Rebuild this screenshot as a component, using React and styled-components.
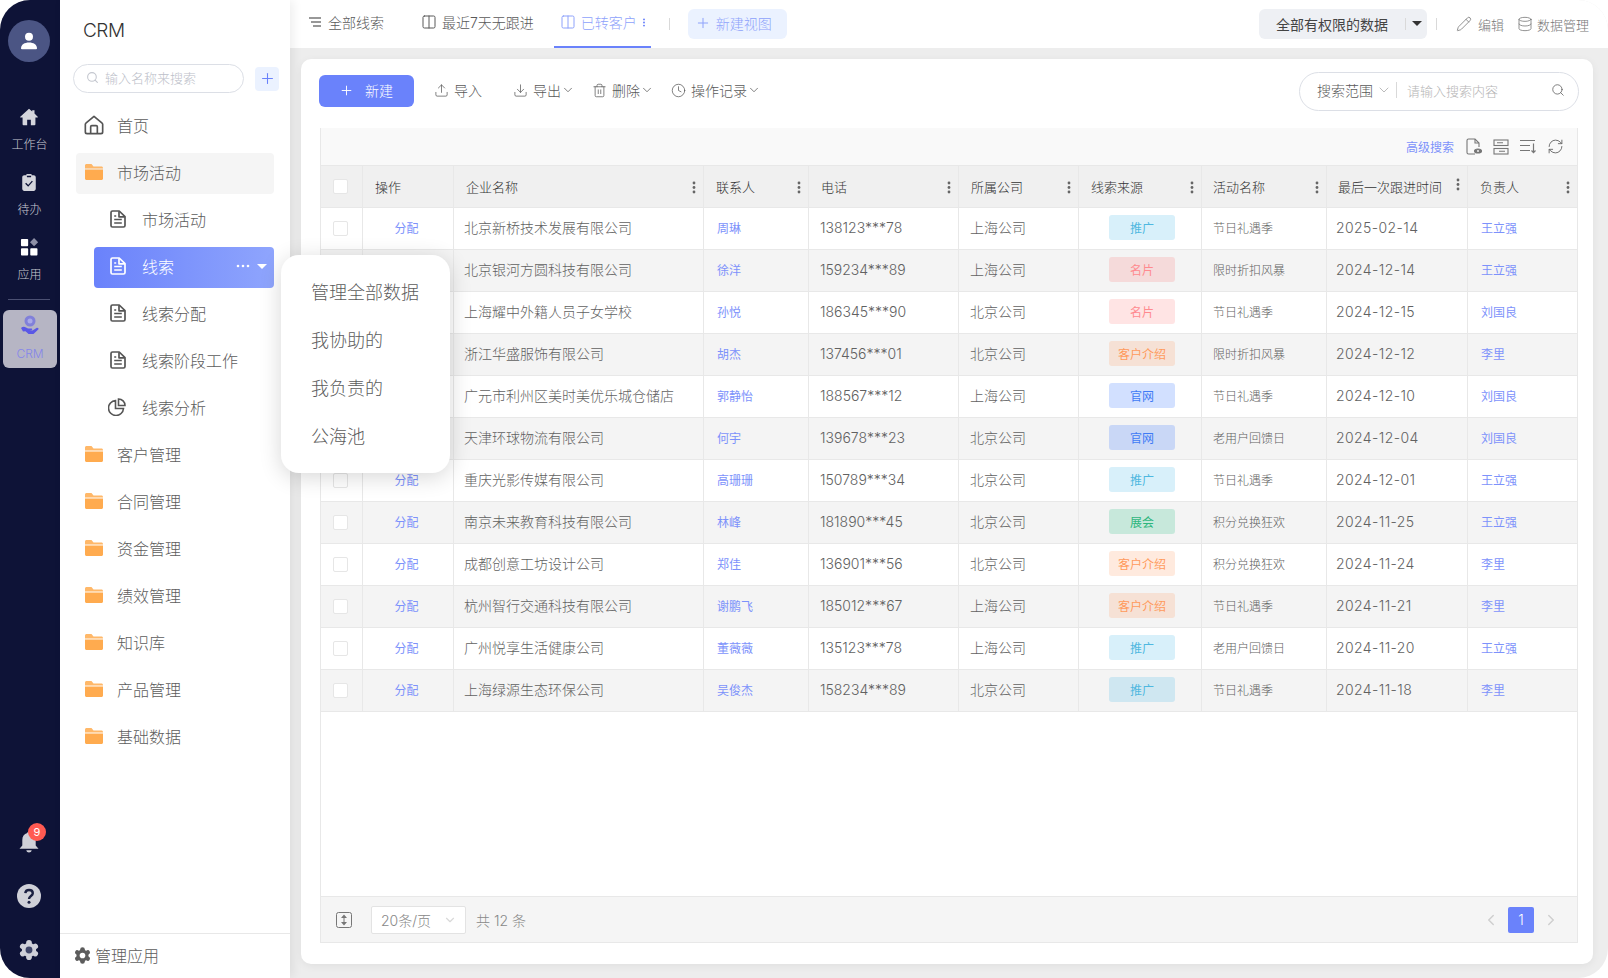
import React from 'react';
import styled, { createGlobalStyle } from 'styled-components';
import {
  Plus, Upload, Download, Trash2, Clock, ChevronDown, ChevronLeft, ChevronRight,
  Search, Pencil, Database, RefreshCw, Columns2,
} from 'lucide-react';

const GlobalStyle = createGlobalStyle`
  html, body { margin: 0; padding: 0; background: #fff; }
  * { box-sizing: border-box; }
  body {
    font-family: Inter, "Noto Sans CJK SC", sans-serif;
    font-weight: 300;
    color: #595959;
  }
`;

const COLUMNS = '43px 91px 250px 105px 150px 120px 123px 125px 141px 1fr';

const Shell = styled.div`
  width: 1608px;
  height: 978px;
  display: flex;
  overflow: hidden;
  border-radius: 30px;
  background: #ededed;
`;

/* dark rail */
const Rail = styled.aside`
  width: 60px;
  flex: none;
  background: #0e1337;
  display: flex;
  flex-direction: column;
  align-items: center;
  padding: 20px 2px 16px 0;
`;
const Avatar = styled.div`
  width: 42px;
  height: 42px;
  border-radius: 50%;
  background: #4b5584;
  display: flex;
  align-items: center;
  justify-content: center;
  margin-bottom: 44px;
`;
const RailItem = styled.div`
  height: 48px;
  margin-bottom: 17px;
  padding-left: 1px;
  display: flex;
  flex-direction: column;
  align-items: center;
  gap: 8px;
  color: #c9cad3;
  font-size: 12px;
  line-height: 18px;
  &:nth-of-type(4) { margin-bottom: 0; }
`;
const RailLine = styled.div`
  width: 42px;
  height: 1px;
  background: #4b5072;
  margin: 15px 0 10px;
`;
const RailActive = styled.div`
  width: 54px;
  height: 58px;
  margin-left: 2px;
  border-radius: 6px;
  background: #b6b5c4;
  color: #8585ea;
  font-size: 12px;
  display: flex;
  flex-direction: column;
  align-items: center;
  padding-top: 5px;
  gap: 10px;
  line-height: 18px;
`;
const RailBottom = styled.div`
  margin-top: auto;
  display: flex;
  flex-direction: column;
  align-items: center;
  gap: 30px;
`;
const BellWrap = styled.div`
  position: relative;
  height: 24px;
`;
const Badge = styled.span`
  position: absolute;
  top: -7px;
  left: 11px;
  width: 18px;
  height: 18px;
  border-radius: 50%;
  background: #ff5a52;
  color: #fff;
  font-size: 11px;
  font-weight: 400;
  line-height: 18px;
  text-align: center;
`;

/* app nav */
const Nav = styled.nav`
  width: 230px;
  flex: none;
  background: #fff;
  position: relative;
  z-index: 3;
  display: flex;
  flex-direction: column;
  box-shadow: 3px 0 10px rgba(0, 0, 0, 0.07);
`;
const NavTitle = styled.div`
  height: 64px;
  padding: 19px 0 0 23px;
  font-size: 19px;
  letter-spacing: -0.5px;
  line-height: 24px;
  color: #333;
`;
const NavSearchRow = styled.div`
  display: flex;
  align-items: center;
  gap: 11px;
  padding-left: 13px;
  height: 29px;
  margin-bottom: 13px;
`;
const NavSearch = styled.div`
  width: 171px;
  height: 29px;
  border: 1px solid #dcdfe6;
  border-radius: 15px;
  display: flex;
  align-items: center;
  gap: 6px;
  padding: 0 0 2px 12px;
  font-size: 13px;
  color: #bcc0c9;
`;
const AddBox = styled.div`
  width: 24px;
  height: 24px;
  border-radius: 4px;
  background: #ebf2ff;
  color: #6a82fb;
  display: flex;
  align-items: center;
  justify-content: center;
`;
const NavList = styled.div`
  display: flex;
  flex-direction: column;
  gap: 6px;
  padding: 0 16px;
`;
const NavItem = styled.div`
  position: relative;
  height: 41px;
  display: flex;
  align-items: center;
  margin-left: ${(p) => (p.$sub ? '18px' : '0')};
  padding: 0 0 3px ${(p) => (p.$sub ? '16px' : '9px')};
  gap: ${(p) => (p.$sub ? '16px' : '14px')};
  border-radius: 4px;
  font-size: 16px;
  color: ${(p) => (p.$selected ? '#fff' : '#5c5c5c')};
  background: ${(p) =>
    p.$selected ? 'linear-gradient(90deg, #6a82fb, #8fa5fd)' : p.$open ? '#f5f5f5' : 'transparent'};
`;
const ItemTools = styled.div`
  margin-left: auto;
  margin-right: 7px;
  display: flex;
  align-items: center;
  gap: 7px;
`;
const Menu = styled.div`
  position: absolute;
  left: 187px;
  top: 8px;
  width: 169px;
  height: 218px;
  border-radius: 18px;
  background: #fff;
  box-shadow: 0 4px 22px rgba(0, 0, 0, 0.16);
  padding: 14px 0 0 30px;
  color: #5c5c5c;
  font-size: 18px;
  line-height: 48px;
`;
const NavFoot = styled.div`
  margin-top: auto;
  height: 45px;
  border-top: 1px solid #e8e8e8;
  display: flex;
  align-items: center;
  gap: 4px;
  padding: 0 0 2px 14px;
  font-size: 16px;
  color: #5c5c5c;
`;

/* main */
const Main = styled.main`
  flex: 1;
  min-width: 0;
  display: flex;
  flex-direction: column;
`;
const TopBar = styled.header`
  height: 48px;
  flex: none;
  background: #fff;
  display: flex;
  align-items: center;
  padding-left: 19px;
  font-size: 14px;
`;
const Tab = styled.div`
  height: 48px;
  display: flex;
  align-items: center;
  gap: ${(p) => p.$gap || 5}px;
  padding: ${(p) => p.$pad || '0'};
  color: ${(p) => (p.$active ? '#8ea2fb' : '#595959')};
  border-bottom: 2px solid ${(p) => (p.$active ? '#6a82fb' : 'transparent')};
  padding-bottom: 2px;
`;
const VLine = styled.span`
  width: 1px;
  height: ${(p) => p.$h || 12}px;
  background: #d9d9d9;
  margin: ${(p) => p.$m || '0'};
`;
const NewView = styled.div`
  width: 99px;
  height: 30px;
  border-radius: 6px;
  background: #ebf2ff;
  color: #8ea2fb;
  display: flex;
  align-items: center;
  gap: 5px;
  padding: 0 0 2px 7px;
`;
const Scope = styled.div`
  margin-left: auto;
  width: 168px;
  height: 30px;
  border-radius: 6px;
  background: #eef0f4;
  color: #444;
  font-weight: 400;
  display: flex;
  align-items: center;
  padding: 0 0 1px 17px;
`;
const Caret = styled.span`
  width: 0;
  height: 0;
  border-left: ${(p) => p.$size}px solid transparent;
  border-right: ${(p) => p.$size}px solid transparent;
  border-top: ${(p) => p.$size}px solid ${(p) => p.$color};
`;
const TopAction = styled.div`
  display: flex;
  align-items: center;
  gap: ${(p) => p.$gap}px;
  font-size: 13px;
  color: #777;
  margin-right: ${(p) => p.$mr};
`;

const Content = styled.div`
  flex: 1;
  min-height: 0;
  padding: 11px 15px 14px 11px;
  display: flex;
`;
const Card = styled.section`
  flex: 1;
  min-width: 0;
  background: #fff;
  border-radius: 10px;
  box-shadow: 0 2px 8px rgba(0, 0, 0, 0.06);
  padding: 12px 15px 21px 19px;
  display: flex;
  flex-direction: column;
`;
const Toolbar = styled.div`
  height: 40px;
  flex: none;
  margin-bottom: 17px;
  display: flex;
  align-items: center;
  margin-left: -1px;
  font-size: 14px;
`;
const NewButton = styled.div`
  width: 95px;
  height: 32px;
  border-radius: 6px;
  background: #6a82fb;
  color: #fff;
  display: flex;
  align-items: center;
  gap: 11px;
  padding: 0 0 2px 20px;
  margin-right: 20px;
`;
const ToolAction = styled.div`
  display: flex;
  align-items: center;
  gap: 5px;
  color: #595959;
  padding-bottom: 2px;
  margin-right: ${(p) => p.$mr};
`;
const MoreChevron = styled(ChevronDown)`
  margin-left: -5px;
`;
const SearchGroup = styled.div`
  margin-left: auto;
  margin-right: -1px;
  width: 280px;
  height: 39px;
  border: 1px solid #dcdfe6;
  border-radius: 20px;
  display: flex;
  align-items: center;
  padding: 0 13px 2px 17px;
`;
const ScopeChevron = styled(ChevronDown)`
  margin: 0 4px 0 3px;
`;
const SearchHint = styled.span`
  margin-left: 10px;
  font-size: 13px;
  color: #b5b5b5;
  flex: 1;
`;

const Table = styled.div`
  flex: 1;
  min-height: 0;
  display: flex;
  flex-direction: column;
  border-left: 1px solid #e8e8e8;
  border-right: 1px solid #e8e8e8;
`;
const TableBar = styled.div`
  height: 38px;
  flex: none;
  background: #f9f9f9;
  display: flex;
  align-items: center;
  justify-content: flex-end;
  gap: 11px;
  padding-right: 13px;
  border-bottom: 1px solid #e8e8e8;
  color: #666;
`;
const AdvLink = styled.span`
  font-size: 12px;
  font-weight: 400;
  color: #7d92fb;
  margin-right: 1px;
`;
const Row = styled.div`
  display: grid;
  grid-template-columns: ${COLUMNS};
  height: 42px;
  flex: none;
  margin-left: -1px;
  margin-right: -1px;
  border-bottom: 1px solid #e8e8e8;
  background: ${(p) => (p.$head ? '#f0f0f0' : p.$alt ? '#f4f4f4' : '#fff')};
`;
const Cell = styled.div`
  display: flex;
  align-items: center;
  min-width: 0;
  white-space: nowrap;
  padding: 0 0 3px ${(p) => p.$pad ?? 11}px;
  justify-content: ${(p) => (p.$center ? 'center' : 'flex-start')};
  border-right: 1px solid #e8e8e8;
  font-size: ${(p) => p.$size || 14}px;
  letter-spacing: ${(p) => p.$track || 0}px;
  color: #616161;
`;
const ActionCell = styled(Cell)`
  padding: 0 3px 2px 0;
  justify-content: center;
`;
const CheckCell = styled.div`
  display: flex;
  align-items: center;
  justify-content: center;
  padding-right: 3px;
  border-left: 1px solid #e8e8e8;
  border-right: 1px solid #e8e8e8;
`;
const HeadCell = styled(Cell)`
  font-size: 13px;
  color: #333;
  justify-content: space-between;
  padding: 0 7px 0 ${(p) => p.$pad}px;
`;
const Kebab = styled.svg`
  flex: none;
  width: 4px;
  height: ${(p) => p.$h || 13}px;
  color: ${(p) => p.$color || '#666'};
  margin-top: ${(p) => (p.$up ? '-4px' : p.$h ? '0' : '2px')};
`;
const Check = styled.span`
  width: 15px;
  height: 15px;
  background: #fff;
  border: 1px solid #e6e6e6;
  border-radius: 2px;
`;
const LinkText = styled.span`
  color: #7d92fb;
  font-size: 12px;
  font-weight: 400;
`;
const Tag = styled.span`
  width: 66px;
  height: 25px;
  margin-left: 4px;
  border-radius: 3px;
  display: flex;
  align-items: center;
  justify-content: center;
  font-size: 12px;
  font-weight: 400;
  color: ${(p) => p.$fg};
  background: ${(p) => p.$bg};
`;
const TagCell = styled(Cell)`
  padding: 0 0 2px;
  justify-content: center;
`;
const Footer = styled.div`
  margin-top: auto;
  margin-left: -1px;
  margin-right: -1px;
  height: 47px;
  flex: none;
  background: #f5f5f5;
  border: 1px solid #e8e8e8;
  display: flex;
  align-items: center;
  padding-left: 15px;
  font-size: 14px;
  color: #888;
`;
const PageSize = styled.div`
  width: 95px;
  height: 28px;
  background: #fff;
  border: 1px solid #e3e3e3;
  border-radius: 2px;
  margin: 0 10px 0 19px;
  padding: 0 8px 0 9px;
  display: flex;
  align-items: center;
  justify-content: space-between;
`;
const Pager = styled.div`
  margin-left: auto;
  margin-right: 17px;
  display: flex;
  align-items: center;
  gap: 8px;
  color: #cfcfcf;
`;
const PageNum = styled.div`
  width: 26px;
  height: 26px;
  border-radius: 2px;
  background: #6a82fb;
  color: #fff;
  font-size: 14px;
  display: flex;
  align-items: center;
  justify-content: center;
`;

const HomeIcon = () => (
  <svg width="24" height="24" viewBox="0 0 24 24" fill="#d4d5dc">
    <path d="M12 3 2.500 11.600c-.4.4-.1 1 .4 1H5V20c0 .6.4 1 1 1h4v-6h4v6h4c.6 0 1-.4 1-1v-7.400h2.100c.5 0 .8-.6.4-1L18 8.300V4.500h-2.500v1.500z" />
  </svg>
);
const TodoIcon = () => (
  <svg width="24" height="24" viewBox="-1 -1 26 26">
    <path fill="#d4d5dc" d="M9 2.500h6V4h2.500C18.900 4 20 5 20 6.500V20c0 1.400-1.100 2.500-2.500 2.500h-11C5.100 22.500 4 21.400 4 20V6.500C4 5 5.100 4 6.500 4H9z" />
    <path fill="none" stroke="#0e1337" strokeWidth="1.500" d="M8 13.500l3 3 5-5.500M9.500 5.500h5" />
  </svg>
);
const AppsIcon = () => (
  <svg width="24" height="24" viewBox="-1 -1 26 26" fill="#fff">
    <rect x="2.500" y="2.500" width="8.500" height="8.500" rx="1" />
    <rect x="2.500" y="13.500" width="8.500" height="8.500" rx="1" />
    <rect x="13.500" y="13.500" width="8.500" height="8.500" rx="1" />
    <path fill="#8e90a6" d="M18 1.500l4.800 4.800-4.800 4.800-4.800-4.800z" />
  </svg>
);
const CrmIcon = () => (
  <svg width="20" height="20" viewBox="0 0 20 20">
    <circle cx="10" cy="6" r="5.500" fill="#6f6fe0" opacity=".75" />
    <circle cx="10" cy="6" r="2.500" fill="#a9a9e8" />
    <path fill="#5a58e6" d="M1 13c1.500-1.500 3.500-1.500 5-.5l2 1h3.500c1 0 1 1.500 0 1.500H9.500l3 .5 4-2.500c1.200-.6 2.500.4 2 1.300L13.500 19H8.500l-3-2.800-2.500.3z" />
  </svg>
);
const BellIcon = () => (
  <svg width="24" height="24" viewBox="0 0 24 24" fill="#cfd0d8">
    <path d="M12 1.500c1 0 1.700.7 1.700 1.600C17 4 18.700 6.800 18.700 10v5.500l2.800 3.200H2.500l2.800-3.200V10C5.300 6.800 7 4 10.300 3.100c0-.9.700-1.600 1.700-1.600z" />
    <path d="M9.300 20.200h5.400c-.3 1.300-1.400 2.300-2.700 2.300s-2.400-1-2.700-2.300z" />
  </svg>
);
const HelpIcon = () => (
  <svg width="24" height="24" viewBox="0 0 24 24">
    <circle cx="12" cy="12" r="12" fill="#cfd0d8" />
    <path fill="none" stroke="#1b2042" strokeWidth="2.400" d="M8.300 9.200C8.500 7 10 6 12 6c2.200 0 3.800 1.300 3.800 3.200 0 2.800-3.800 2.800-3.800 5.800" />
    <circle cx="12" cy="18.200" r="1.500" fill="#1b2042" />
  </svg>
);
const Gear = ({ size, fill, hole, view = '0 0 24 24' }) => (
  <svg width={size} height={size} viewBox={view} fill={fill}>
    <circle cx="12" cy="12" r="8.400" />
    {[0, 60, 120, 180, 240, 300].map((deg) => (
      <circle key={deg} cx="12" cy="3.600" r="3.300" transform={`rotate(${deg} 12 12)`} />
    ))}
    <circle cx="12" cy="12" r="4" fill={hole} />
  </svg>
);
const UserIcon = () => (
  <svg width="20" height="20" viewBox="0 0 20 20" fill="#fff">
    <circle cx="10" cy="5.800" r="4" />
    <path d="M2 17.500c0-4 3.500-6 8-6s8 2 8 6c0 .5-.4.800-1 .8H3c-.6 0-1-.3-1-.8z" />
  </svg>
);
const HomeOutline = styled.svg`
  margin: 0 -1px 0 -1px;
`;
const NavHome = () => (
  <HomeOutline width="20" height="20" viewBox="0 0 18 18" fill="none" stroke="#555" strokeWidth="1.500" strokeLinejoin="round">
    <path d="M9 1.200 16.300 7.400c.3.300.5.600.5 1v6.800c0 .8-.7 1.500-1.500 1.500H2.700c-.8 0-1.500-.7-1.500-1.500V8.400c0-.4.200-.7.500-1z" />
    <path d="M6 16.700V10.500c0-.5.500-1 1-1h4c.5 0 1 .5 1 1v6.200" />
  </HomeOutline>
);
const Folder = () => (
  <svg width="18" height="16" viewBox="0 0 18 16" fill="#ffab4f">
    <path d="M0 1.500C0 .7.700 0 1.500 0h5l2 2.500H16.500C17.300 2.500 18 3.200 18 4v.5H0z" opacity=".85" />
    <path d="M0 5.400h18v9c0 .8-.7 1.500-1.500 1.500h-15C.7 15.900 0 15.200 0 14.400z" />
  </svg>
);
const DocIcon = ({ color = '#555' }) => (
  <svg width="16" height="18" viewBox="0 0 16 18" fill="none" stroke={color} strokeWidth="1.700" strokeLinejoin="round">
    <path d="M2.500 1h6.700L15 6.600V15.500c0 .8-.7 1.500-1.500 1.500h-11c-.8 0-1.500-.7-1.500-1.500v-13C1 1.700 1.700 1 2.500 1z" />
    <path d="M9 1.200V6.800h5.800M4.200 9.500h7.600M4.200 13h7.600M4.200 6h2" />
  </svg>
);
const PieSvg = styled.svg`
  margin-left: -2px;
`;
const PieIcon = () => (
  <PieSvg width="18" height="18" viewBox="0 0 18 18" fill="none" stroke="#555" strokeWidth="1.600">
    <path d="M7.500 2.500a7.500 7.500 0 1 0 8 8H7.500z" />
    <path d="M10.500 1v6.500H17A6.500 6.500 0 0 0 10.500 1z" />
  </PieSvg>
);
const Dots = () => (
  <svg width="14" height="4" viewBox="0 0 14 4" fill="#fff">
    <circle cx="2" cy="2" r="1.300" />
    <circle cx="7" cy="2" r="1.300" />
    <circle cx="12" cy="2" r="1.300" />
  </svg>
);
const ListIcon = () => (
  <svg width="12" height="10" viewBox="0 0 12 10" stroke="#333" strokeWidth="1.200" fill="none">
    <path d="M0 1h12M2 5h10M4 9h8" />
  </svg>
);
const FileEye = () => (
  <svg width="16" height="17" viewBox="0 0 16 17" fill="none" stroke="#777" strokeWidth="1.100">
    <path d="M9 16H2.500C1.700 16 1 15.300 1 14.500v-12C1 1.700 1.700 1 2.500 1H9l4 4v4" />
    <path d="M9 1v4h4" />
    <ellipse cx="12" cy="13" rx="3.500" ry="2" fill="#777" />
    <circle cx="12" cy="13" r=".9" fill="#fff" stroke="none" />
  </svg>
);
const FormIcon = () => (
  <svg width="16" height="16" viewBox="0 0 16 16" fill="none" stroke="#777" strokeWidth="1.100">
    <rect x="1" y="1" width="14" height="5.500" />
    <rect x="1" y="9.500" width="14" height="5.500" />
    <path d="M4 3.800h6M6 12.200h6" />
  </svg>
);
const ColsIcon = () => (
  <svg width="16" height="15" viewBox="0 0 16 15" fill="none" stroke="#777" strokeWidth="1.200">
    <path d="M0 1.500h15M0 6.500h10M0 11.500h10M13.500 4.500v9M11.500 11.500l2 2.200 2-2.200" />
  </svg>
);
const ExpandIcon = () => (
  <svg width="16" height="16" viewBox="0 0 16 16" fill="none" stroke="#777" strokeWidth="1">
    <rect x=".5" y=".5" width="15" height="15" rx="2" />
    <path fill="#777" stroke="none" d="M8 2.500 11 6H5zM8 13.500 5 10h6z" />
    <path d="M8 5v6" />
  </svg>
);
const KebabDots = ({ up, small }) => (
  <Kebab viewBox="0 0 4 13" $up={up} $h={small ? 9 : 0} $color={small ? '#6a82fb' : ''}>
    <circle cx="2" cy="2" r="1.400" fill="currentColor" />
    <circle cx="2" cy="6.500" r="1.400" fill="currentColor" />
    <circle cx="2" cy="11" r="1.400" fill="currentColor" />
  </Kebab>
);

const TONES = {
  推广: ['#4fb8e0', 'rgba(60, 180, 230, 0.2)'],
  名片: ['#ff8a8f', 'rgba(255, 90, 90, 0.16)'],
  客户介绍: ['#ff9a5c', 'rgba(255, 130, 60, 0.17)'],
  官网: ['#3f7bf5', 'rgba(60, 120, 255, 0.23)'],
  展会: ['#2eb67d', 'rgba(40, 190, 130, 0.22)'],
};

const ROWS = [
  ['北京新桥技术发展有限公司', '周琳', '138123***78', '上海公司', '推广', '节日礼遇季', '2025-02-14', '王立强'],
  ['北京银河方圆科技有限公司', '徐洋', '159234***89', '上海公司', '名片', '限时折扣风暴', '2024-12-14', '王立强'],
  ['上海耀中外籍人员子女学校', '孙悦', '186345***90', '北京公司', '名片', '节日礼遇季', '2024-12-15', '刘国良'],
  ['浙江华盛服饰有限公司', '胡杰', '137456***01', '北京公司', '客户介绍', '限时折扣风暴', '2024-12-12', '李里'],
  ['广元市利州区美时美优乐城仓储店', '郭静怡', '188567***12', '上海公司', '官网', '节日礼遇季', '2024-12-10', '刘国良'],
  ['天津环球物流有限公司', '何宇', '139678***23', '北京公司', '官网', '老用户回馈日', '2024-12-04', '刘国良'],
  ['重庆光影传媒有限公司', '高珊珊', '150789***34', '北京公司', '推广', '节日礼遇季', '2024-12-01', '王立强'],
  ['南京未来教育科技有限公司', '林峰', '181890***45', '北京公司', '展会', '积分兑换狂欢', '2024-11-25', '王立强'],
  ['成都创意工坊设计公司', '郑佳', '136901***56', '北京公司', '客户介绍', '积分兑换狂欢', '2024-11-24', '李里'],
  ['杭州智行交通科技有限公司', '谢鹏飞', '185012***67', '上海公司', '客户介绍', '节日礼遇季', '2024-11-21', '李里'],
  ['广州悦享生活健康公司', '董薇薇', '135123***78', '上海公司', '推广', '老用户回馈日', '2024-11-20', '王立强'],
  ['上海绿源生态环保公司', '吴俊杰', '158234***89', '北京公司', '推广', '节日礼遇季', '2024-11-18', '李里'],
];

const HEADS = [
  ['企业名称', 12], ['联系人', 12], ['电话', 12], ['所属公司', 12],
  ['线索来源', 12], ['活动名称', 11], ['最后一次跟进时间', 11, true], ['负责人', 12],
];

const FOLDERS = ['客户管理', '合同管理', '资金管理', '绩效管理', '知识库', '产品管理', '基础数据'];

function App() {
  return (
    <Shell>
      <GlobalStyle />
      <Rail>
        <Avatar><UserIcon /></Avatar>
        <RailItem><HomeIcon />工作台</RailItem>
        <RailItem><TodoIcon />待办</RailItem>
        <RailItem><AppsIcon />应用</RailItem>
        <RailLine />
        <RailActive><CrmIcon />CRM</RailActive>
        <RailBottom>
          <BellWrap><BellIcon /><Badge>9</Badge></BellWrap>
          <HelpIcon />
          <Gear size={24} fill="#cfd0d8" hole="#3f4568" view="-2 -2 28 28" />
        </RailBottom>
      </Rail>

      <Nav>
        <NavTitle>CRM</NavTitle>
        <NavSearchRow>
          <NavSearch><Search size={13} color="#c4c7cf" />输入名称来搜索</NavSearch>
          <AddBox><Plus size={17} strokeWidth={1.5} /></AddBox>
        </NavSearchRow>
        <NavList>
          <NavItem><NavHome />首页</NavItem>
          <NavItem $open><Folder />市场活动</NavItem>
          <NavItem $sub><DocIcon />市场活动</NavItem>
          <NavItem $sub $selected>
            <DocIcon color="#fff" />线索
            <ItemTools><Dots /><Caret $size={5} $color="#fff" /></ItemTools>
            <Menu>
              <div>管理全部数据</div>
              <div>我协助的</div>
              <div>我负责的</div>
              <div>公海池</div>
            </Menu>
          </NavItem>
          <NavItem $sub><DocIcon />线索分配</NavItem>
          <NavItem $sub><DocIcon />线索阶段工作</NavItem>
          <NavItem $sub><PieIcon />线索分析</NavItem>
          {FOLDERS.map((name) => (
            <NavItem key={name}><Folder />{name}</NavItem>
          ))}
        </NavList>
        <NavFoot><Gear size={17} fill="#5c5c5c" hole="#fff" />管理应用</NavFoot>
      </Nav>

      <Main>
        <TopBar>
          <Tab $gap={7} $pad="0 37px 0 0"><ListIcon />全部线索</Tab>
          <Tab $pad="0 20px 0 0"><Columns2 size={16} strokeWidth={1.5} />最近7天无跟进</Tab>
          <Tab $active $pad="0 5px 0 6px"><Columns2 size={16} strokeWidth={1.5} />已转客户<KebabDots small /></Tab>
          <VLine $m="0 18px 0 18px" />
          <NewView><Plus size={16} strokeWidth={1.5} />新建视图</NewView>
          <Scope>
            全部有权限的数据
            <VLine $m="0 6px 0 17px" />
            <Caret $size={5} $color="#333" />
          </Scope>
          <VLine $m="0 19px 0 9px" />
          <TopAction $gap={6} $mr="13px"><Pencil size={16} strokeWidth={1.2} />编辑</TopAction>
          <TopAction $gap={4} $mr="19px"><Database size={16} strokeWidth={1.2} />数据管理</TopAction>
        </TopBar>

        <Content>
          <Card>
            <Toolbar>
              <NewButton><Plus size={15} strokeWidth={1.5} />新建</NewButton>
              <ToolAction $mr="31px"><Upload size={15} strokeWidth={1.2} />导入</ToolAction>
              <ToolAction $mr="17px"><Download size={15} strokeWidth={1.2} />导出<MoreChevron size={14} strokeWidth={1.3} /></ToolAction>
              <ToolAction $mr="17px"><Trash2 size={15} strokeWidth={1.2} />删除<MoreChevron size={14} strokeWidth={1.3} /></ToolAction>
              <ToolAction $mr="0"><Clock size={15} strokeWidth={1.2} />操作记录<MoreChevron size={14} strokeWidth={1.3} /></ToolAction>
              <SearchGroup>
                搜索范围
                <ScopeChevron size={16} strokeWidth={1.3} color="#b0b0b0" />
                <VLine $h={16} />
                <SearchHint>请输入搜索内容</SearchHint>
                <Search size={14} strokeWidth={1.3} />
              </SearchGroup>
            </Toolbar>

            <Table>
              <TableBar>
                <AdvLink>高级搜索</AdvLink>
                <FileEye />
                <FormIcon />
                <ColsIcon />
                <RefreshCw size={17} strokeWidth={1.3} />
              </TableBar>
              <Row $head>
                <CheckCell><Check /></CheckCell>
                <HeadCell $pad={12}>操作</HeadCell>
                {HEADS.map(([name, pad, up]) => (
                  <HeadCell key={name} $pad={pad}>{name}<KebabDots up={up} /></HeadCell>
                ))}
              </Row>
              {ROWS.map((row, i) => (
                <Row key={row[0]} $alt={i % 2 === 1}>
                  <CheckCell><Check /></CheckCell>
                  <ActionCell><LinkText>分配</LinkText></ActionCell>
                  <Cell $pad={10}>{row[0]}</Cell>
                  <Cell $pad={13}><LinkText>{row[1]}</LinkText></Cell>
                  <Cell>{row[2]}</Cell>
                  <Cell>{row[3]}</Cell>
                  <TagCell><Tag $fg={TONES[row[4]][0]} $bg={TONES[row[4]][1]}>{row[4]}</Tag></TagCell>
                  <Cell $size={12}>{row[5]}</Cell>
                  <Cell $pad={9} $track={0.4}>{row[6]}</Cell>
                  <Cell $pad={13}><LinkText>{row[7]}</LinkText></Cell>
                </Row>
              ))}
              <Footer>
                <ExpandIcon />
                <PageSize>20条/页<ChevronDown size={14} color="#d9d9d9" /></PageSize>
                共 12 条
                <Pager>
                  <ChevronLeft size={18} />
                  <PageNum>1</PageNum>
                  <ChevronRight size={18} />
                </Pager>
              </Footer>
            </Table>
          </Card>
        </Content>
      </Main>
    </Shell>
  );
}

export default App;
